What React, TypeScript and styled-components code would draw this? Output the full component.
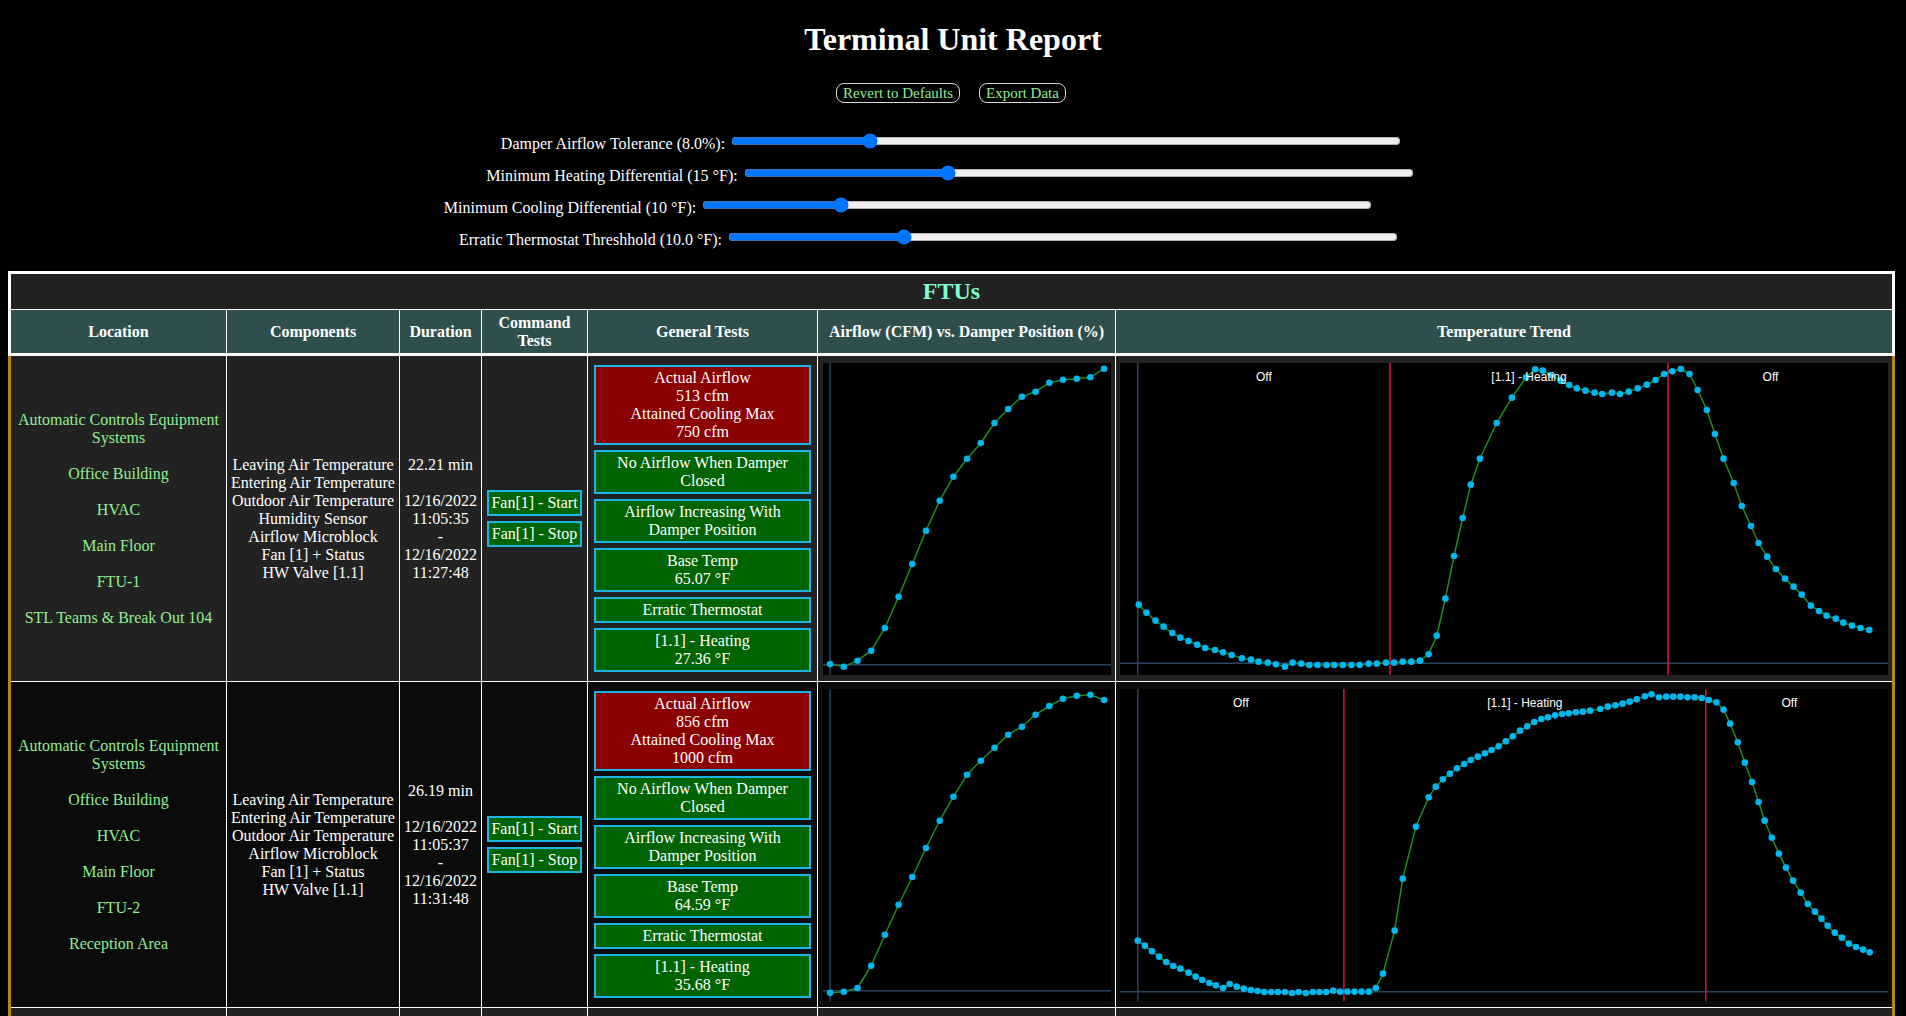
import React from "react";
import styled, { createGlobalStyle } from "styled-components";

const GlobalStyle = createGlobalStyle`
  html, body { background: #000; }
  body {
    margin: 0 8px 8px;
    color: #fff;
    font-family: "Liberation Serif", "Times New Roman", serif;
    font-size: 16px;
  }
`;

const Title = styled.h1`
  margin: 21px 0 0;
  text-align: center;
  font-size: 32px;
  line-height: 37px;
  font-weight: bold;
`;

const ButtonBar = styled.div`
  display: flex;
  justify-content: center;
  gap: 19px;
  margin-top: 25px;
  padding-right: 4px;
`;

const ActionButton = styled.button`
  background: #000;
  color: #90ee90;
  border: 1px solid #d8d8d8;
  border-radius: 8px;
  font-family: "Liberation Serif", "Times New Roman", serif;
  font-size: 15px;
  line-height: 16px;
  height: 20px;
  padding: 1px 6px;
  cursor: pointer;
`;

const SliderList = styled.div`
  display: flex;
  flex-direction: column;
  align-items: center;
  margin-top: 22px;
`;

const SliderRow = styled.div<{ $trail: number }>`
  display: flex;
  align-items: center;
  justify-content: center;
  height: 32px;
  gap: 4px;
  padding-right: ${(p) => p.$trail}px;
`;

const SliderLabel = styled.label`
  font-size: 16px;
  line-height: 18px;
  padding-top: 6px;
  white-space: nowrap;
`;

const Range = styled.input`
  width: 670px;
  margin: 2px;
`;

const Frame = styled.div`
  width: 1887px;
  margin-top: 18px;
  border-top: 3px solid #fff;
  background: #fff;
  display: flex;
  flex-direction: column;
`;

const Caption = styled.div`
  height: 35px;
  background: #222;
  border-left: 3px solid #fff;
  border-right: 3px solid #fff;
  margin-bottom: 1px;
  display: flex;
  align-items: center;
  justify-content: center;
  color: #7fffd4;
  font-size: 24px;
  font-weight: bold;
`;

const COLS = "215px 172px 81px 105px 229px 297px 776px";

const HeaderRow = styled.div`
  display: grid;
  grid-template-columns: ${COLS};
  column-gap: 1px;
  background: #fff;
  border-left: 3px solid #fff;
  border-right: 3px solid #fff;
  margin-bottom: 3px;
`;

const HeaderCell = styled.div`
  height: 43px;
  background: #2f4f4f;
  display: flex;
  align-items: center;
  justify-content: center;
  text-align: center;
  font-weight: bold;
  line-height: 18px;
  padding: 0 3px;
`;

const BodyRow = styled.div`
  display: grid;
  grid-template-columns: ${COLS};
  column-gap: 1px;
  height: 326px;
  padding-bottom: 1px;
  box-sizing: border-box;
  background: #fff;
  border-left: 3px solid #b8860b;
  border-right: 3px solid #b8860b;
`;

const Cell = styled.div<{ $shade: string }>`
  background: ${(p) => p.$shade};
  display: flex;
  align-items: center;
  justify-content: center;
  text-align: center;
  line-height: 18px;
  padding: 0 1px;
  min-width: 0;
`;

const LocationList = styled.div`
  display: flex;
  flex-direction: column;
  gap: 18px;
  color: #90ee90;
`;

const LineStack = styled.div`
  display: flex;
  flex-direction: column;
`;

const Spacer = styled.div`
  height: 18px;
`;

const CommandStack = styled.div`
  display: inline-flex;
  flex-direction: column;
  gap: 5px;
`;

const CommandButton = styled.div`
  background: #006400;
  border: 2px solid #1db3e4;
  padding: 2px;
  color: #fff;
  white-space: nowrap;
  line-height: 18px;
`;

const TestList = styled.div`
  width: 217px;
  display: flex;
  flex-direction: column;
  gap: 5px;
`;

const TestBox = styled.div<{ $pass: boolean }>`
  background: ${(p) => (p.$pass ? "#006400" : "#8b0000")};
  border: 2px solid #1db3e4;
  padding: 2px;
  line-height: 18px;
  text-align: center;
`;

const Plot = styled.svg`
  display: block;
  background: #000;
`;

const AXIS = "#2b4560";
const LINE = "#228b22";
const DOT = "#00b6ee";

type AirProps = { ys: number[] };

function AirflowChart({ ys }: AirProps) {
  const pts = ys.map((y, i) => [7.1 + i * 13.7, y]);
  return (
    <Plot width={288} height={312} viewBox="0 0 288 312">
      <line x1={7.1} y1={0} x2={7.1} y2={312} stroke={AXIS} strokeWidth={1.5} />
      <line x1={0} y1={301.7} x2={288} y2={301.7} stroke={AXIS} strokeWidth={1.5} />
      <polyline
        points={pts.map((p) => p.join(",")).join(" ")}
        fill="none"
        stroke={LINE}
        strokeWidth={1.5}
      />
      {pts.map((p, i) => (
        <circle key={i} cx={p[0]} cy={p[1]} r={3.3} fill={DOT} />
      ))}
    </Plot>
  );
}

type TempProps = {
  raw: number[][];
  yOff: number;
  axisY: number;
  splits: number[];
  labels: string[];
};

function TempChart({ raw, yOff, axisY, splits, labels }: TempProps) {
  const pts = raw.map(([zx, zy]) => [(zx - 20) / 1.97, (zy - yOff) / 3]);
  const edges = [17.8, ...splits, 753];
  return (
    <Plot width={768} height={312} viewBox="0 0 768 312">
      <line x1={17.8} y1={0} x2={17.8} y2={312} stroke={AXIS} strokeWidth={1.5} />
      <line x1={0} y1={axisY} x2={768} y2={axisY} stroke={AXIS} strokeWidth={1.5} />
      {splits.map((x) => (
        <line key={x} x1={x} y1={0} x2={x} y2={312} stroke="#dc143c" strokeWidth={1.5} />
      ))}
      <polyline
        points={pts.map((p) => p.join(",")).join(" ")}
        fill="none"
        stroke={LINE}
        strokeWidth={1.5}
      />
      {pts.map((p, i) => (
        <circle key={i} cx={p[0]} cy={p[1]} r={3.3} fill={DOT} />
      ))}
      {labels.map((t, i) => (
        <text
          key={i}
          x={(edges[i] + edges[i + 1]) / 2}
          y={18}
          fill="#fff"
          fontSize={12}
          fontFamily='"Liberation Sans", Arial, sans-serif'
          textAnchor="middle"
        >
          {t}
        </text>
      ))}
    </Plot>
  );
}

const temp1 = [[57,1022],[72,1046],[90,1070],[106,1088],[123,1107],[139,1121],[155,1131],[172,1142],[188,1152],[207,1158],[223,1165],[240,1173],[260,1183],[278,1187],[293,1193],[311,1196],[327,1201],[345,1208],[360,1196],[377,1199],[393,1203],[409,1203],[427,1203],[442,1203],[459,1203],[476,1203],[492,1203],[510,1199],[526,1199],[544,1196],[560,1196],[577,1193],[594,1193],[611,1190],[628,1171],[644,1115],[661,1004],[678,876],[695,762],[711,662],[729,584],[762,477],[792,401],[820,340],[838,316],[853,320],[870,333],[888,350],[905,363],[920,373],[937,380],[955,386],[970,390],[989,386],[1005,390],[1022,383],[1040,373],[1058,362],[1075,348],[1092,330],[1108,322],[1125,315],[1142,330],[1158,378],[1176,438],[1192,510],[1209,584],[1229,657],[1245,726],[1263,786],[1278,837],[1295,878],[1312,915],[1330,944],[1347,968],[1363,992],[1381,1025],[1397,1041],[1412,1055],[1430,1064],[1445,1076],[1462,1085],[1479,1092],[1496,1098]];

const temp2 = [[55,788],[69,803],[83,820],[97,836],[111,852],[125,864],[139,872],[155,884],[169,896],[182,906],[196,915],[209,922],[223,930],[236,918],[250,926],[264,932],[278,936],[291,939],[304,942],[318,942],[331,942],[345,942],[359,945],[372,942],[386,945],[400,942],[413,942],[426,942],[440,938],[454,941],[468,941],[482,941],[496,941],[510,941],[524,930],[538,887],[561,758],[577,602],[603,446],[628,358],[642,326],[656,304],[670,287],[684,271],[698,258],[711,246],[725,236],[739,226],[752,216],[766,205],[780,190],[794,175],[808,158],[822,145],[836,132],[850,123],[863,118],[877,112],[891,108],[904,106],[918,103],[932,101],[946,98],[966,93],[981,86],[996,82],[1010,77],[1024,71],[1038,64],[1054,55],[1067,49],[1082,58],[1096,56],[1110,56],[1124,56],[1138,58],[1152,58],[1166,60],[1180,66],[1195,73],[1209,95],[1222,137],[1237,193],[1251,254],[1265,312],[1278,372],[1290,428],[1304,479],[1318,527],[1332,569],[1346,608],[1361,644],[1375,678],[1389,701],[1402,722],[1414,743],[1428,764],[1442,779],[1456,797],[1470,807],[1484,815],[1497,823]];

type Unit = {
  location: string[];
  components: string[];
  minutes: string;
  start: string[];
  end: string[];
  actual: string;
  max: string;
  base: string;
  heating: string;
  shade: string;
  air: number[];
  temp: number[][];
  tempOff: number;
  tempAxis: number;
  splits: number[];
};

const units: Unit[] = [
  {
    location: ["Automatic Controls Equipment Systems", "Office Building", "HVAC", "Main Floor", "FTU-1", "STL Teams & Break Out 104"],
    components: ["Leaving Air Temperature", "Entering Air Temperature", "Outdoor Air Temperature", "Humidity Sensor", "Airflow Microblock", "Fan [1] + Status", "HW Valve [1.1]"],
    minutes: "22.21 min",
    start: ["12/16/2022", "11:05:35"],
    end: ["12/16/2022", "11:27:48"],
    actual: "513",
    max: "750",
    base: "65.07",
    heating: "27.36",
    shade: "#222222",
    air: [301, 303.7, 297.7, 287.7, 265, 233.7, 201, 167.7, 137.7, 113.7, 95.7, 80, 60, 46, 33.7, 28.7, 19.7, 16.7, 15.7, 14.3, 5.7],
    temp: temp1,
    tempOff: 297,
    tempAxis: 300.3,
    splits: [270, 548],
  },
  {
    location: ["Automatic Controls Equipment Systems", "Office Building", "HVAC", "Main Floor", "FTU-2", "Reception Area"],
    components: ["Leaving Air Temperature", "Entering Air Temperature", "Outdoor Air Temperature", "Airflow Microblock", "Fan [1] + Status", "HW Valve [1.1]"],
    minutes: "26.19 min",
    start: ["12/16/2022", "11:05:37"],
    end: ["12/16/2022", "11:31:48"],
    actual: "856",
    max: "1000",
    base: "64.59",
    heating: "35.68",
    shade: "#0b0b0b",
    air: [303.7, 302.7, 299, 276.7, 245.7, 215.7, 188, 159, 131.7, 107.7, 85.7, 71.7, 58.7, 45.7, 37.7, 25.7, 17, 9.7, 6.7, 5.7, 11],
    temp: temp2,
    tempOff: 33,
    tempAxis: 302.7,
    splits: [223.9, 585.8],
  },
];

const sliders = [
  { label: "Damper Airflow Tolerance (8.0%):", min: 0, max: 40, value: 8, trail: 2 },
  { label: "Minimum Heating Differential (15 °F):", min: 0, max: 50, value: 15, trail: 4 },
  { label: "Minimum Cooling Differential (10 °F):", min: 0, max: 50, value: 10, trail: 88 },
  { label: "Erratic Thermostat Threshhold (10.0 °F):", min: 1, max: 36, value: 10, trail: 47 },
];

const headers = [
  "Location",
  "Components",
  "Duration",
  "Command Tests",
  "General Tests",
  "Airflow (CFM) vs. Damper Position (%)",
  "Temperature Trend",
];

function UnitRow({ u }: { u: Unit }) {
  return (
    <BodyRow>
      <Cell $shade={u.shade}>
        <LocationList>
          {u.location.map((l) => (
            <div key={l}>{l}</div>
          ))}
        </LocationList>
      </Cell>
      <Cell $shade={u.shade}>
        <LineStack>
          {u.components.map((c) => (
            <div key={c}>{c}</div>
          ))}
        </LineStack>
      </Cell>
      <Cell $shade={u.shade}>
        <LineStack>
          <div>{u.minutes}</div>
          <Spacer />
          <div>{u.start[0]}</div>
          <div>{u.start[1]}</div>
          <div>-</div>
          <div>{u.end[0]}</div>
          <div>{u.end[1]}</div>
        </LineStack>
      </Cell>
      <Cell $shade={u.shade}>
        <CommandStack>
          <CommandButton>Fan[1] - Start</CommandButton>
          <CommandButton>Fan[1] - Stop</CommandButton>
        </CommandStack>
      </Cell>
      <Cell $shade={u.shade}>
        <TestList>
          <TestBox $pass={false}>
            Actual Airflow
            <br />
            {u.actual} cfm
            <br />
            Attained Cooling Max
            <br />
            {u.max} cfm
          </TestBox>
          <TestBox $pass>No Airflow When Damper Closed</TestBox>
          <TestBox $pass>Airflow Increasing With Damper Position</TestBox>
          <TestBox $pass>
            Base Temp
            <br />
            {u.base} °F
          </TestBox>
          <TestBox $pass>Erratic Thermostat</TestBox>
          <TestBox $pass>
            [1.1] - Heating
            <br />
            {u.heating} °F
          </TestBox>
        </TestList>
      </Cell>
      <Cell $shade={u.shade}>
        <AirflowChart ys={u.air} />
      </Cell>
      <Cell $shade={u.shade}>
        <TempChart
          raw={u.temp}
          yOff={u.tempOff}
          axisY={u.tempAxis}
          splits={u.splits}
          labels={["Off", "[1.1] - Heating", "Off"]}
        />
      </Cell>
    </BodyRow>
  );
}

function PendingRow() {
  return (
    <BodyRow>
      {headers.map((h) => (
        <Cell key={h} $shade="#222222" />
      ))}
    </BodyRow>
  );
}

export default function App() {
  return (
    <>
      <GlobalStyle />
      <Title>Terminal Unit Report</Title>
      <ButtonBar>
        <ActionButton>Revert to Defaults</ActionButton>
        <ActionButton>Export Data</ActionButton>
      </ButtonBar>
      <SliderList>
        {sliders.map((s) => (
          <SliderRow key={s.label} $trail={s.trail}>
            <SliderLabel>{s.label}</SliderLabel>
            <Range type="range" min={s.min} max={s.max} step={0.1} defaultValue={s.value} />
          </SliderRow>
        ))}
      </SliderList>
      <Frame>
        <Caption>FTUs</Caption>
        <HeaderRow>
          {headers.map((h) => (
            <HeaderCell key={h}>{h}</HeaderCell>
          ))}
        </HeaderRow>
        {units.map((u) => (
          <UnitRow key={u.location[4]} u={u} />
        ))}
        <PendingRow />
      </Frame>
    </>
  );
}
